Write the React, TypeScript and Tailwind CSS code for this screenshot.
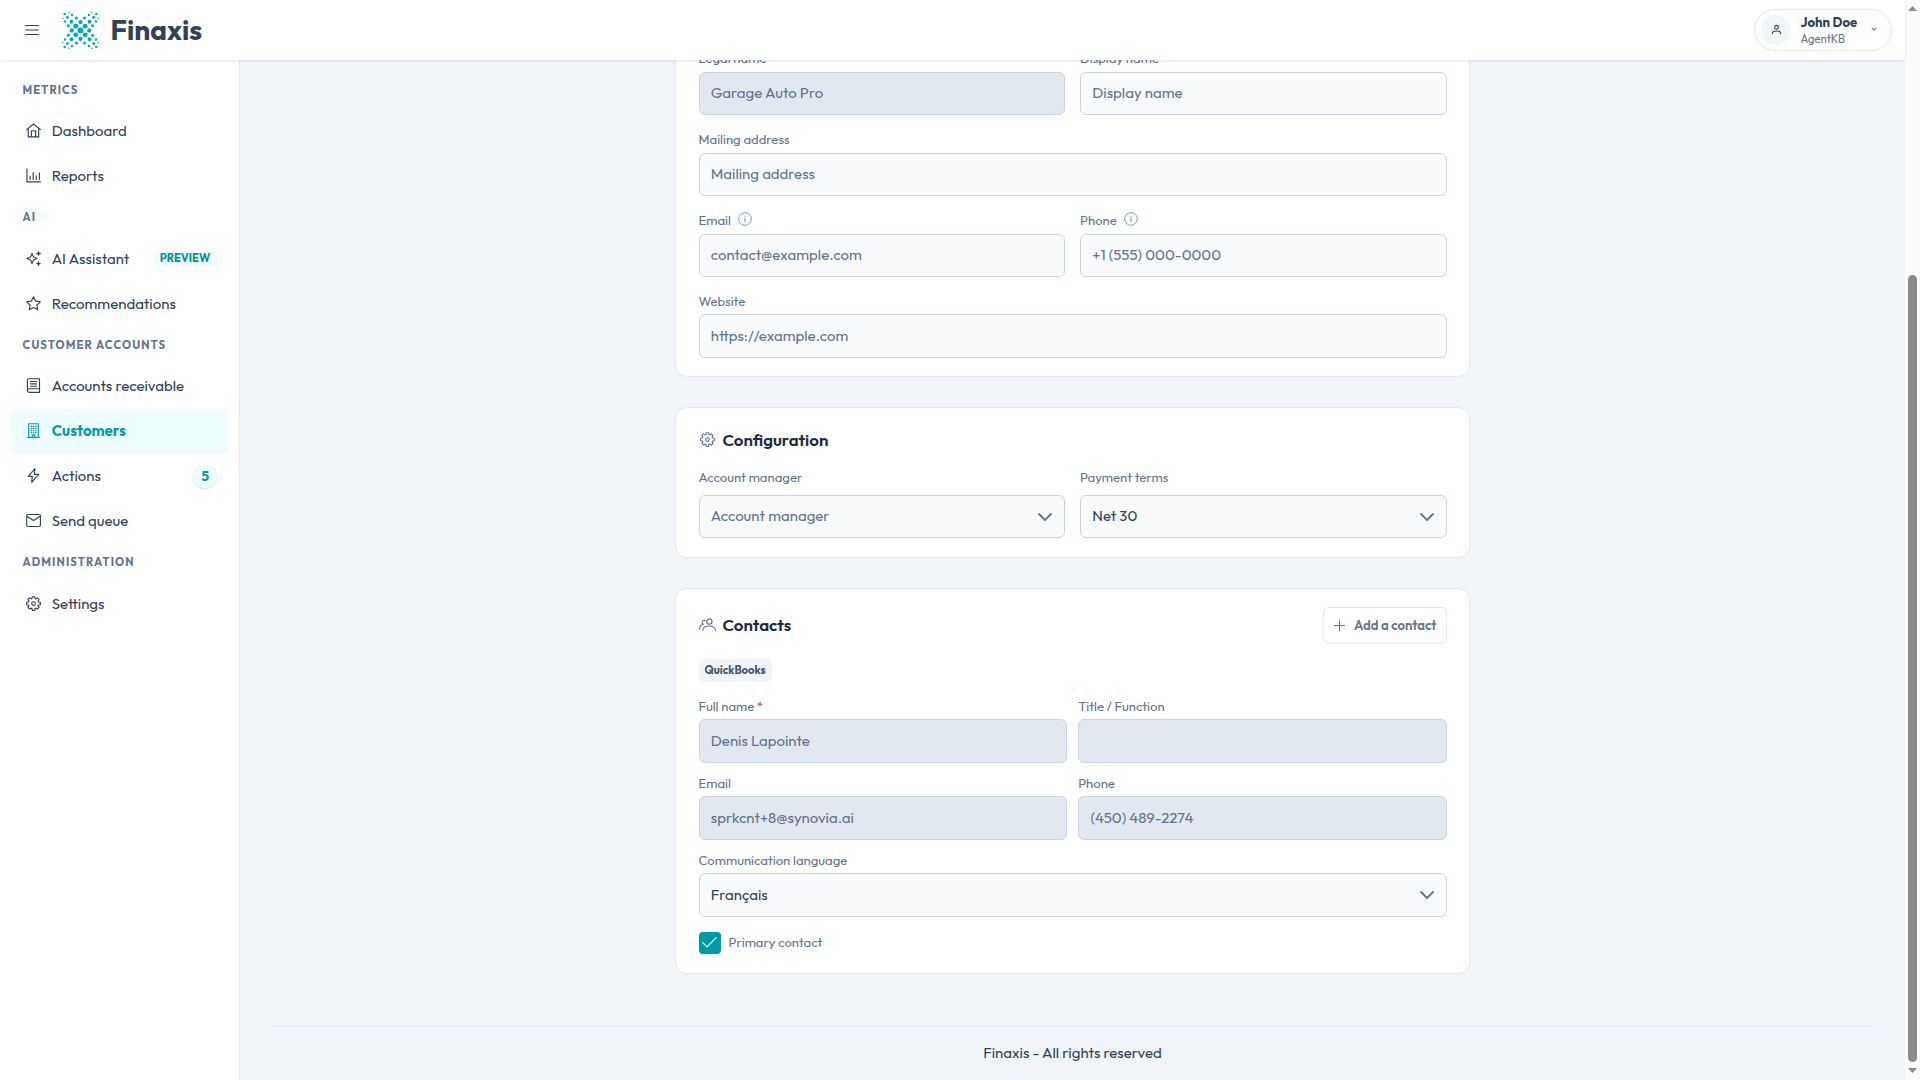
import type { ReactNode } from 'react';
import clsx from 'clsx';

type IconProps = { className?: string };

const Svg = ({ className, children }: { className?: string; children: ReactNode }) => (
  <svg
    viewBox="0 0 15 15"
    className={clsx('shrink-0', className)}
    fill="none"
    stroke="currentColor"
    strokeWidth="1.15"
    strokeLinecap="round"
    strokeLinejoin="round"
  >
    {children}
  </svg>
);

const HomeIcon = ({ className }: IconProps) => (
  <Svg className={className}>
    <path d="M.6 6.600 7.500 1l6.900 5.600M2.300 5.400v8.500h10.400V5.400M5.400 13.900V7.700h4.200v6.200" />
  </Svg>
);

const ReportsIcon = ({ className }: IconProps) => (
  <Svg className={className}>
    <path d="M1 1v12.900h13.500M4.100 8v3.500M7.200 4.500v7M10.300 7.800v3.700M13.400 5v6.500" />
  </Svg>
);

const SparklesIcon = ({ className }: IconProps) => (
  <Svg className={className}>
    <path d="M6 2.400 7.500 6 11 7.500 7.500 9 6 12.600 4.500 9 .9 7.500 4.500 6z" />
    <path d="M12.500.9v3.200M10.900 2.500h3.200M12.500 11v3.200M10.900 12.600h3.200" strokeWidth="1.400" />
  </Svg>
);

const StarIcon = ({ className }: IconProps) => (
  <Svg className={className}>
    <path d="m7.500.8 2.100 4.300 4.700.7-3.400 3.300.8 4.700-4.200-2.200-4.200 2.200.8-4.700L.7 5.800l4.700-.7z" />
  </Svg>
);

const LedgerIcon = ({ className }: IconProps) => (
  <Svg className={className}>
    <path d="M13.500 10.700V.7H3A1.600 1.600 0 0 0 1.400 2.300v10.300A1.700 1.700 0 0 0 3 14.300h10.500v-3.600H3a1.700 1.700 0 0 0-1.600 1.700M4.500 3.500h6M4.500 5.900h6M4.500 8.200h6" />
  </Svg>
);

const BuildingIcon = ({ className }: IconProps) => (
  <Svg className={className}>
    <path d="M1.500 14.300h12M2.700 14.300V.7h9.600v13.600M6.300 14.300v-2.500h2.400v2.500" />
    <path
      d="M4.700 3.300h1.400M6.900 3.300h1.400M9.100 3.300h1.400M4.700 5.400h1.400M6.900 5.400h1.400M9.100 5.400h1.400M4.700 7.500h1.400M6.900 7.500h1.400M9.100 7.500h1.400M4.700 9.600h1.400M6.900 9.600h1.400M9.100 9.600h1.400"
      strokeWidth="1.400"
      strokeLinecap="butt"
    />
  </Svg>
);

const BoltIcon = ({ className }: IconProps) => (
  <Svg className={className}>
    <path d="M8.900.6 2.300 8.300h4L5.700 14.400l7-8H8.400z" />
  </Svg>
);

const MailIcon = ({ className }: IconProps) => (
  <Svg className={className}>
    <rect x=".7" y="1.500" width="13.700" height="12" rx="1.200" />
    <path d="m1.200 3.500 6.300 3.900 6.300-3.900" />
  </Svg>
);

// eight teeth, four corner points each
const gearPoints = Array.from({ length: 8 }, (_, i) =>
  [[-16, 5.300], [-10, 6.900], [10, 6.900], [16, 5.300]].map(([offset, r]) => {
    const a = ((i * 45 + offset) * Math.PI) / 180;
    return `${(7.5 + r * Math.sin(a)).toFixed(2)},${(7.5 - r * Math.cos(a)).toFixed(2)}`;
  })
)
  .flat()
  .join(' ');

const GearIcon = ({ className }: IconProps) => (
  <Svg className={className}>
    <circle cx="7.500" cy="7.500" r="1.800" />
    <polygon points={gearPoints} />
  </Svg>
);

const PeopleIcon = ({ className }: IconProps) => (
  <svg viewBox="0 0 17 13" className={clsx('shrink-0', className)} fill="none" stroke="currentColor" strokeWidth="1.150" strokeLinecap="round">
    <circle cx="10.300" cy="3.500" r="2.700" />
    <path d="M3.900 12.200c0-2.900 2.400-4.200 6.200-4.200s6.300 1.500 6.300 4.200M6.100 2.400C4.300 2 3.200 3 3.200 4.400c0 .9.400 1.500 1 1.900C1.700 7 .5 8.700.6 11.200" />
  </svg>
);

const InfoIcon = () => (
  <svg viewBox="0 0 14 14" className="size-3.5 shrink-0 text-[#7f9ab4]" fill="none" stroke="currentColor">
    <circle cx="7" cy="7" r="6.300" />
    <path d="M7 6v4.200M7 3.700v1.200" strokeWidth="1.100" />
  </svg>
);

const Chevron = () => (
  <svg viewBox="0 0 16 16" className="-mr-[0.500px] size-4 shrink-0 text-slate-500" fill="none" stroke="currentColor" strokeWidth="1.800" strokeLinecap="round" strokeLinejoin="round">
    <path d="m2 5 6 6 6-6" />
  </svg>
);

// one quadrant of the dotted mark: [dx, dy, radius], mirrored on both axes
const logoDots = [
  [0, 0, 9],
  [14, 13, 7.4],
  [0, 25, 6.4],
  [26, 0, 6.4],
  [27, 26, 5.6],
  [12, 37, 4.6],
  [36, 14, 4.6],
  [39, 39, 4.4],
  [25, 46, 3.600],
  [46, 27, 3.600],
  [47, 49, 3.800],
  [34, 53, 2.100],
  [53, 36, 2.100],
];

const Logo = () => (
  <svg viewBox="-55 -55 110 110" className="size-[37px] fill-[#05a9b8]">
    {logoDots.flatMap(([x, y, r]) =>
      [[1, 1], [-1, 1], [1, -1], [-1, -1]]
        .filter(([sx, sy]) => (x || sx > 0) && (y || sy > 0))
        .map(([sx, sy]) => <circle key={`${x * sx},${y * sy}`} cx={x * sx} cy={y * sy} r={r} />)
    )}
  </svg>
);

const navSections = [
  {
    title: 'METRICS',
    items: [
      { name: 'Dashboard', icon: HomeIcon },
      { name: 'Reports', icon: ReportsIcon },
    ],
  },
  {
    title: 'AI',
    items: [
      { name: 'AI Assistant', icon: SparklesIcon, tag: 'PREVIEW' },
      { name: 'Recommendations', icon: StarIcon },
    ],
  },
  {
    title: 'CUSTOMER ACCOUNTS',
    items: [
      { name: 'Accounts receivable', icon: LedgerIcon },
      { name: 'Customers', icon: BuildingIcon, active: true },
      { name: 'Actions', icon: BoltIcon, count: 5 },
      { name: 'Send queue', icon: MailIcon },
    ],
  },
  {
    title: 'ADMINISTRATION',
    items: [{ name: 'Settings', icon: GearIcon }],
  },
] as {
  title: string;
  items: { name: string; icon: (p: IconProps) => ReactNode; tag?: string; count?: number; active?: boolean }[];
}[];

const Header = () => (
  <header className="relative z-10 flex h-[60px] shrink-0 items-center bg-white pr-[13px] pl-[25px] shadow-[0_1px_3px_rgba(15,23,42,0.1)]">
    <svg viewBox="0 0 14 12" className="h-3 w-3.5 text-slate-700" stroke="currentColor" strokeWidth="1.200" strokeLinecap="round">
      <path d="M.6 1.500h12.800M.6 6h12.800M.6 10.500h12.800" />
    </svg>
    <div className="ml-[23px] flex items-center gap-[11.500px]">
      <Logo />
      <span className="text-[28px] leading-none font-bold text-slate-700">Finaxis</span>
    </div>
    <div className="ml-auto flex h-[42px] w-[138px] items-center rounded-full border border-slate-200 pl-1.5">
      <div className="flex size-[30px] items-center justify-center rounded-full bg-slate-100 text-slate-700">
        <svg viewBox="0 0 12 12" className="mb-px size-[11px]" fill="none" stroke="currentColor" strokeWidth="1.100" strokeLinecap="round">
          <circle cx="6" cy="3.600" r="2.100" />
          <path d="M1.300 10.600c.2-2 1.900-3 4.700-3s4.500 1 4.700 3" />
        </svg>
      </div>
      <div className="ml-[9.500px] flex flex-col">
        <span className="text-[13.125px] leading-[17px] font-bold text-slate-700">John Doe</span>
        <span className="text-[11.250px] leading-4 text-slate-500">AgentKB</span>
      </div>
      <svg viewBox="0 0 6 4" className="mr-auto mb-0.5 ml-[14px] h-1 w-1.5 text-slate-500" fill="none" stroke="currentColor" strokeWidth="1.100">
        <path d="m.8.8 2.200 2.200L5.200.8" />
      </svg>
    </div>
  </header>
);

const Sidebar = () => (
  <nav className="w-60 shrink-0 border-r border-slate-200 bg-white px-[11.250px] pt-[11.250px]">
    {navSections.map((section) => (
      <div key={section.title}>
        <h2 className="flex h-[37.500px] items-center pl-[11.250px] text-[11.250px] font-bold tracking-[1.125px] text-slate-500">
          {section.title}
        </h2>
        {section.items.map((item) => {
          const Icon = item.icon;
          return (
            <a
              key={item.name}
              className={clsx(
                'flex h-[45px] items-center rounded-md pr-[10.500px] pl-[15px] text-[15px]',
                item.active ? 'bg-[#eefdff] font-bold text-[#059ba5]' : 'text-slate-700'
              )}
            >
              <Icon className="mb-px size-[15px]" />
              <span className="ml-[10.500px]">{item.name}</span>
              {item.tag && (
                <span className="mr-[0.500px] ml-auto flex h-[15px] items-center rounded bg-[#eefdff] pr-[6.500px] pl-[6px] pb-px text-[11.250px] font-bold text-[#068f9b]">
                  {item.tag}
                </span>
              )}
              {item.count && (
                <span className="ml-auto flex size-6 items-center justify-center rounded-full bg-[#eefdff] text-sm font-bold text-[#059ba5] shadow-[0_1px_2px_rgba(15,23,42,0.15)]">
                  {item.count}
                </span>
              )}
            </a>
          );
        })}
      </div>
    ))}
  </nav>
);

type FieldProps = {
  label: string;
  value?: string;
  placeholder?: string;
  disabled?: boolean;
  required?: boolean;
  info?: boolean;
  select?: boolean;
  labelGap?: string;
};

const Field = ({ label, value, placeholder, disabled, required, info, select, labelGap = 'mb-[3.750px] pt-[0.800px]' }: FieldProps) => (
  <div>
    <div className={clsx('flex h-[18.750px] items-center text-[13.125px] text-slate-500', labelGap)}>
      {label}
      {required && <span className="ml-[2.500px] text-[#c2571a]">*</span>}
      {info && <span className="mb-[4.500px] ml-[7.500px]"><InfoIcon /></span>}
    </div>
    <div
      className={clsx(
        'flex h-[43.250px] items-center justify-between rounded-md border border-slate-300 px-[11.250px] text-[15px]',
        disabled ? 'bg-slate-200' : 'bg-slate-50',
        value && !disabled ? 'text-slate-700' : 'text-slate-500'
      )}
    >
      <span>{value || placeholder}</span>
      {select && <Chevron />}
    </div>
  </div>
);

const Card = ({ className, children }: { className?: string; children: ReactNode }) => (
  <section className={clsx('rounded-xl border border-slate-200 bg-white px-[22.500px]', className)}>{children}</section>
);

const CardTitle = ({ icon, children }: { icon: ReactNode; children: ReactNode }) => (
  <h3 className="flex h-[25.250px] items-center text-[16.875px] font-semibold text-slate-800">
    <span className="mr-[7px] flex w-[17px] justify-center text-slate-500">{icon}</span>
    {children}
  </h3>
);

const Scrollbar = () => (
  <div className="flex w-[15px] shrink-0 flex-col items-center bg-[#fcfcfc] pt-1.5 pb-[7px]">
    <svg viewBox="0 0 9 5" className="h-[5px] w-[9px] fill-[#8b8b8b]"><path d="M0 5 4.500 0 9 5z" /></svg>
    <div className="mt-auto h-[787px] w-[9px] rounded-full bg-[#8b8b8b]" />
    <svg viewBox="0 0 9 5" className="mt-1.5 h-[5px] w-[9px] fill-[#8b8b8b]"><path d="M0 0 4.500 5 9 0z" /></svg>
  </div>
);

export default function App() {
  return (
    <div className="flex h-[1080px] w-[1920px] overflow-hidden bg-white font-['Outfit','Lato',sans-serif]">
      <div className="flex min-w-0 flex-1 flex-col">
        <Header />
        <div className="flex min-h-0 flex-1">
          <Sidebar />

          {/* Scrolled to the end, so the content hangs from the bottom edge */}
          <main className="flex flex-1 flex-col justify-end overflow-hidden bg-slate-100 px-[30px]">
            <div className="mx-auto flex w-[795px] shrink-0 flex-col gap-[30px]">
              <Card className="pt-[18.750px] pb-[18.500px]">
                <div className="grid grid-cols-2 gap-[15px]">
                  <Field label="Legal name" value="Garage Auto Pro" disabled />
                  <Field label="Display name" placeholder="Display name" />
                  <div className="col-span-2">
                    <Field label="Mailing address" placeholder="Mailing address" />
                  </div>
                  <Field label="Email" placeholder="contact@example.com" info />
                  <Field label="Phone" placeholder="+1 (555) 000-0000" info />
                  <div className="col-span-2">
                    <Field label="Website" placeholder="https://example.com" />
                  </div>
                </div>
              </Card>

              <Card className="py-[18.750px]">
                <CardTitle icon={<GearIcon className="size-[15px]" />}>Configuration</CardTitle>
                <div className="mt-[16.250px] grid grid-cols-2 gap-[15px]">
                  <Field label="Account manager" placeholder="Account manager" select labelGap="mb-2" />
                  <Field label="Payment terms" value="Net 30" select labelGap="mb-2" />
                </div>
              </Card>

              <Card className="pt-[18px] pb-[18.750px]">
                <div className="flex items-center justify-between">
                  <div className="pb-px">
                    <CardTitle icon={<PeopleIcon className="mb-px h-[13px] w-[17px]" />}>Contacts</CardTitle>
                  </div>
                  <button className="flex h-[36.500px] w-[124px] items-center rounded-md border border-slate-200 pt-px pl-[10.500px] text-[13.125px] font-semibold text-slate-500">
                    <svg viewBox="0 0 11 11" className="mr-[9px] mb-px size-[11px]" stroke="currentColor" strokeLinecap="round">
                      <path d="M5.500.5v10M.5 5.500h10" />
                    </svg>
                    Add a contact
                  </button>
                </div>
                <div className="mt-[15.250px] flex h-[22.750px] w-[73px] items-center justify-center rounded-md bg-slate-100 text-[11.250px] font-bold text-slate-600">
                  QuickBooks
                </div>
                <div className="mt-[15.300px] grid grid-cols-2 gap-[11.250px]">
                  <Field label="Full name" value="Denis Lapointe" disabled required />
                  <Field label="Title / Function" disabled />
                  <Field label="Email" value="sprkcnt+8@synovia.ai" disabled />
                  <Field label="Phone" value="(450) 489-2274" disabled />
                  <div className="col-span-2">
                    <Field label="Communication language" value="Français" select />
                  </div>
                </div>
                <div className="mt-[15.450px] flex items-center text-[13.125px] text-slate-500">
                  <span className="mr-2 flex size-[22px] items-center justify-center rounded bg-[#009ca6]">
                    <svg viewBox="0 0 22 22" className="size-[22px]" fill="none" stroke="white" strokeWidth="1.200" strokeLinecap="round" strokeLinejoin="round">
                      <path d="m3.800 10.700 4.200 4.200 9.200-9.200" />
                    </svg>
                  </span>
                  Primary contact
                </div>
              </Card>
            </div>

            <footer className="mt-[52.250px] flex h-[54px] shrink-0 items-center justify-center border-t border-slate-200 text-[15px] text-slate-700">
              Finaxis - All rights reserved
            </footer>
          </main>
        </div>
      </div>
      <Scrollbar />
    </div>
  );
}
